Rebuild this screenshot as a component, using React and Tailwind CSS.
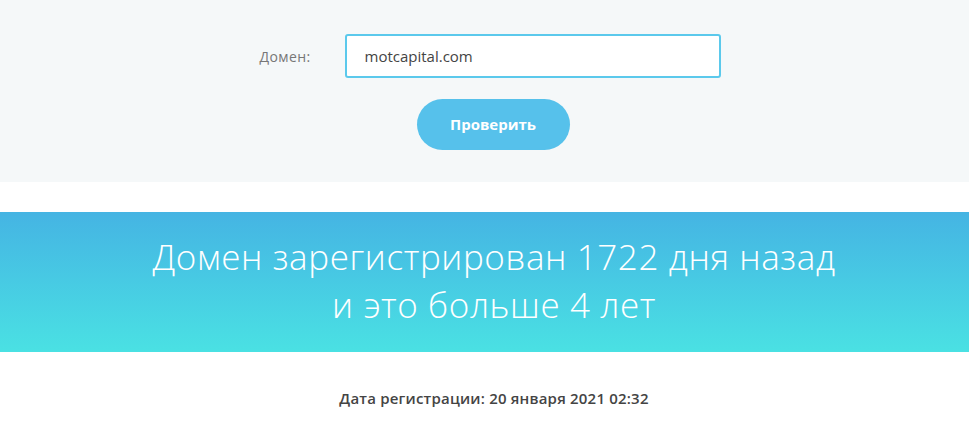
import React, { useState } from 'react';

const App = () => {
  const [domain, setDomain] = useState('motcapital.com');

  return (
    <div className="w-[969px] h-[422px] bg-white overflow-hidden font-['Open_Sans',sans-serif]">
      {/* check form */}
      <div className="h-[182px] bg-[#f5f8f9] flex flex-col items-center pt-[34px]">
        <div className="flex items-center ml-[11px]">
          <label className="w-[85px] text-[14px] tracking-[0.4px] text-[#777]">Домен:</label>
          <input
            value={domain}
            onChange={(e) => setDomain(e.target.value)}
            className="w-[376px] h-[44px] rounded-[3px] border-2 border-[#5bc9ec] bg-white pl-[18px] text-[15px] text-[#444] outline-none"
          />
        </div>
        <button className="mt-[21px] ml-[17px] w-[153px] h-[51px] rounded-full bg-[#56c1eb] text-white text-[15px] font-bold">
          Проверить
        </button>
      </div>

      <div className="h-[30px]" />

      {/* result banner */}
      <div className="h-[140px] pl-[19px] pb-[3px] bg-gradient-to-b from-[#45b4e3] to-[#4ae1e3] flex flex-col items-center justify-center text-white font-light text-[35px] leading-[48px] tracking-[0.6px]">
        <p>Домен зарегистрирован 1722 дня назад</p>
        <p>и это больше 4 лет</p>
      </div>

      <div className="pt-[35px] pl-[19px] text-center text-[15px] tracking-[0.2px] font-semibold text-[#444]">
        Дата регистрации: 20 января 2021 02:32
      </div>
    </div>
  );
};

export default App;
